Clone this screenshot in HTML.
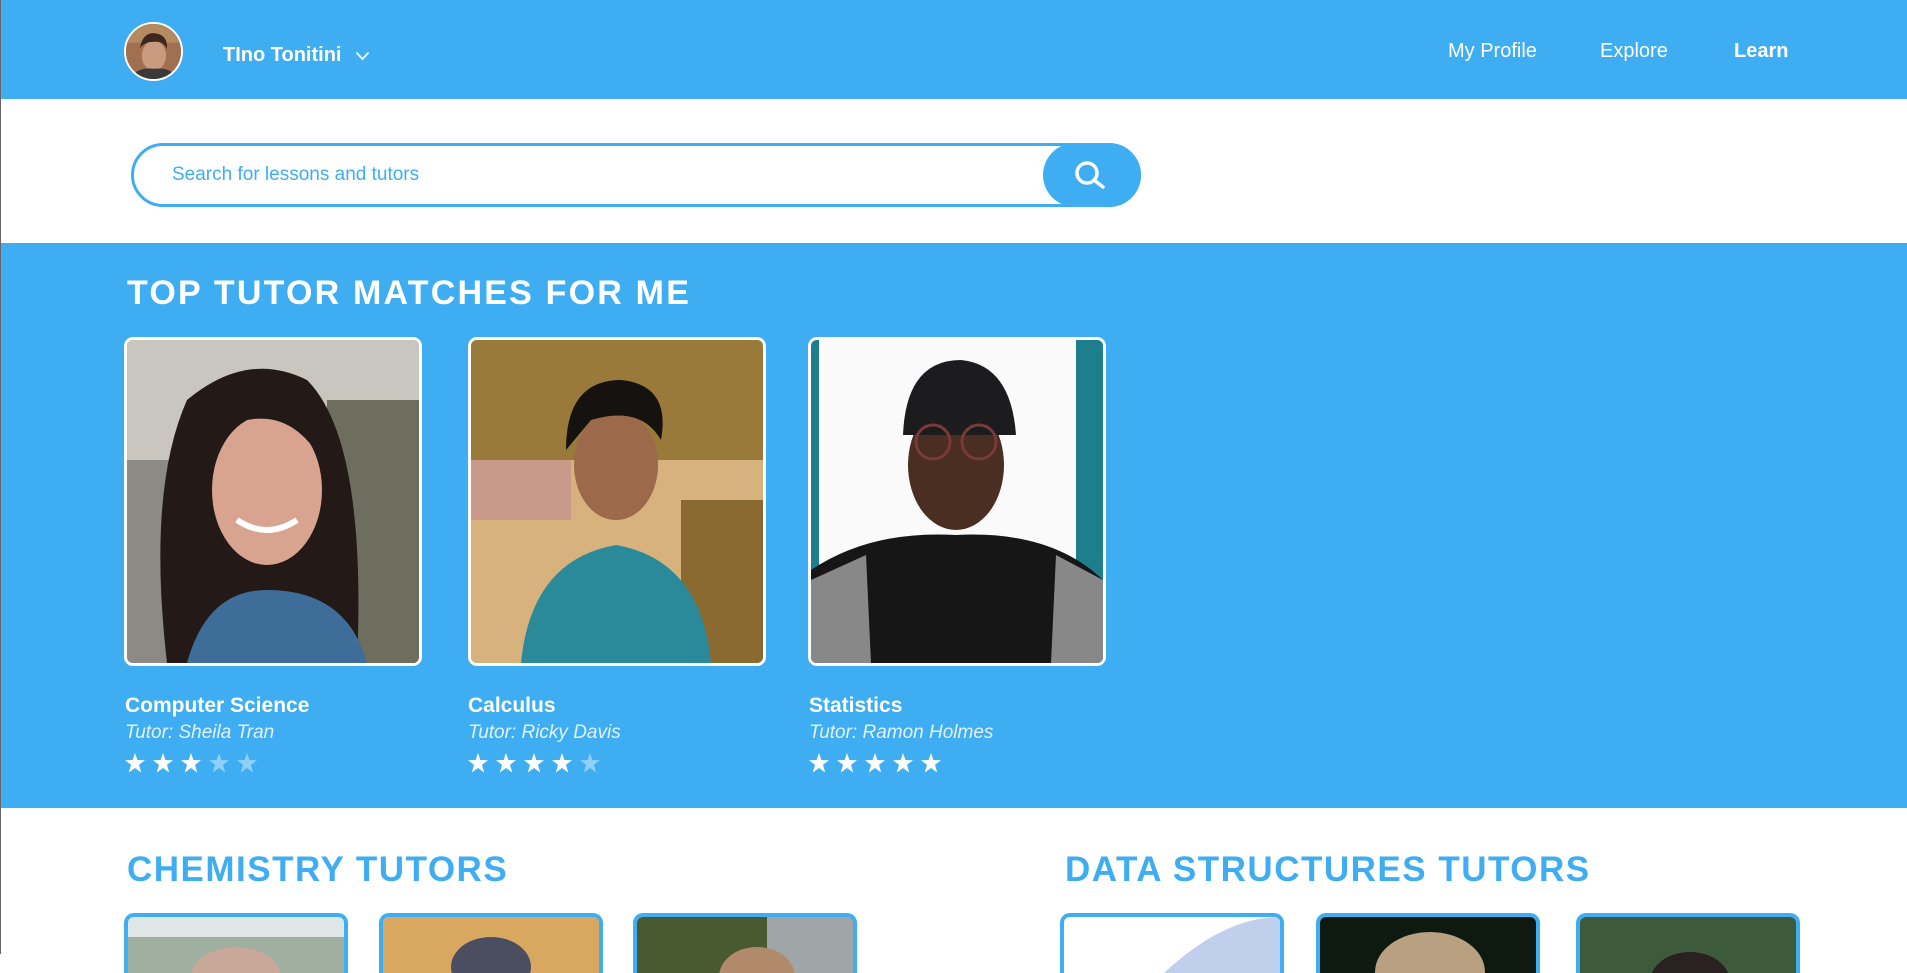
<!DOCTYPE html>
<html><head><meta charset="utf-8"><style>
*{margin:0;padding:0;box-sizing:border-box}
body{width:1907px;height:954px;overflow:hidden;background:#fff;font-family:"Liberation Sans",sans-serif;position:relative;border-left:1px solid #666}
.abs{position:absolute}
.hdr{left:0;top:0;width:1907px;height:99px;background:#3fadf2}
.nav{color:#fff;font-size:20px;top:40px}
.sec{left:0;top:243px;width:1907px;height:565px;background:#3fadf2}
.card{width:298px;height:329px;border:3px solid #fff;border-radius:9px;overflow:hidden;top:337px}
.card svg,.sc svg{display:block;width:100%;height:100%}
.subj{color:#fff;font-size:21px;font-weight:bold;top:694px}
.tut{color:#e3f2fd;font-size:19px;font-style:italic;top:722px}
.stars{top:753px}
.h2{color:#3fadf2;font-size:35px;font-weight:bold;top:850px;letter-spacing:1.5px}
.sc{width:224px;height:60px;top:913px;border:4px solid #3fadf2;border-bottom:none;border-radius:10px 10px 0 0;overflow:hidden}
</style></head><body>
<div class="abs hdr"></div>
<div class="abs" style="left:123px;top:22px;width:59px;height:59px;border-radius:50%;border:2px solid #fff;overflow:hidden;background:#7a5a45">
<svg viewBox="0 0 59 59"><rect width="59" height="59" fill="#a07050"/><rect x="0" y="0" width="59" height="20" fill="#b58a60"/><ellipse cx="30" cy="34" rx="13" ry="16" fill="#c99a7e"/><path d="M15 26 Q18 8 32 10 Q45 12 44 27 Q40 18 30 19 Q20 19 15 26Z" fill="#3a2820"/><path d="M5 59 Q10 46 30 48 Q50 46 54 59Z" fill="#3a3a38"/></svg></div>
<div class="abs" style="left:222px;top:44px;color:#fff;font-size:20px;font-weight:bold">TIno Tonitini</div>
<svg class="abs" style="left:354px;top:51px" width="15" height="10" viewBox="0 0 15 10"><path d="M1.5 1.5 L7.5 8 L13.5 1.5" stroke="#fff" stroke-width="1.8" fill="none"/></svg>
<div class="abs nav" style="left:1447px">My Profile</div>
<div class="abs nav" style="left:1599px">Explore</div>
<div class="abs nav" style="left:1733px;font-weight:bold">Learn</div>

<div class="abs" style="left:130px;top:143px;width:1010px;height:64px;border:3px solid #3fadf2;border-radius:32px;background:#fff"></div>
<div class="abs" style="left:1042px;top:143px;width:98px;height:64px;border-radius:32px;background:#3fadf2"></div>
<svg class="abs" style="left:1070px;top:158px" width="40" height="34" viewBox="0 0 40 34"><circle cx="16" cy="15" r="10" stroke="#fff" stroke-width="3.5" fill="none"/><path d="M23 22 L32 29" stroke="#fff" stroke-width="3.5" stroke-linecap="round"/></svg>
<div class="abs" style="left:171px;top:164px;color:#3fadf2;font-size:19px">Search for lessons and tutors</div>

<div class="abs sec"></div>
<div class="abs" style="left:126px;top:274px;color:#fff;font-size:34px;font-weight:bold;letter-spacing:2.2px">TOP TUTOR MATCHES FOR ME</div>

<div class="abs card" style="left:123px"><svg viewBox="0 0 292 323" preserveAspectRatio="none"><rect width="292" height="323" fill="#8c8a84"/><rect width="292" height="120" fill="#c9c6c0"/><rect x="200" y="60" width="92" height="263" fill="#6d6e5e"/><path d="M40 323 Q20 150 60 60 Q120 10 180 40 Q240 100 230 323Z" fill="#231a18"/><ellipse cx="140" cy="150" rx="55" ry="75" fill="#d9a48f"/><path d="M70 120 Q80 40 150 45 Q200 55 200 130 Q170 70 120 80 Q90 90 70 120Z" fill="#231a18"/><path d="M60 323 Q80 250 140 250 Q220 250 240 323Z" fill="#3f6d9a"/><path d="M110 180 Q140 200 170 180" stroke="#fff" stroke-width="6" fill="none"/></svg></div>
<div class="abs card" style="left:467px"><svg viewBox="0 0 292 323" preserveAspectRatio="none"><rect width="292" height="323" fill="#d7b27c"/><rect width="292" height="120" fill="#9a7a3a"/><rect x="0" y="120" width="100" height="60" fill="#c99a8a"/><rect x="210" y="160" width="82" height="163" fill="#8a6a30"/><ellipse cx="145" cy="125" rx="42" ry="55" fill="#9c6a4a"/><path d="M95 110 Q95 40 150 40 Q200 45 190 100 Q170 65 120 80Z" fill="#151210"/><path d="M50 323 Q60 220 145 205 Q230 220 240 323Z" fill="#2a8a9a"/></svg></div>
<div class="abs card" style="left:807px"><svg viewBox="0 0 292 323" preserveAspectRatio="none"><rect width="292" height="323" fill="#fafafa"/><rect x="0" y="0" width="8" height="323" fill="#1e7f8c"/><rect x="265" y="0" width="27" height="260" fill="#1e7f8c"/><ellipse cx="145" cy="125" rx="48" ry="65" fill="#4a2e22"/><path d="M92 95 Q95 20 150 20 Q200 25 205 95 Z" fill="#1c1c1e"/><circle cx="122" cy="102" r="17" stroke="#7a3a3a" stroke-width="3" fill="none"/><circle cx="168" cy="102" r="17" stroke="#7a3a3a" stroke-width="3" fill="none"/><path d="M0 323 L0 230 Q60 190 145 195 Q240 190 292 240 L292 323Z" fill="#161616"/><path d="M0 240 L55 215 L60 323 L0 323Z M245 215 L292 240 L292 323 L240 323Z" fill="#888"/></svg></div>

<div class="abs subj" style="left:124px">Computer Science</div>
<div class="abs tut" style="left:124px">Tutor: Sheila Tran</div>
<div class="abs subj" style="left:467px">Calculus</div>
<div class="abs tut" style="left:467px">Tutor: Ricky Davis</div>
<div class="abs subj" style="left:808px">Statistics</div>
<div class="abs tut" style="left:808px">Tutor: Ramon Holmes</div>

<svg width="0" height="0" style="position:absolute"><defs><polygon id="st" points="10,0 12.4,7 20,7.2 14,11.8 16.2,19.5 10,15 3.8,19.5 6,11.8 0,7.2 7.6,7"/></defs></svg>
<svg class="abs stars" style="left:124px" width="140" height="22"><use href="#st" fill="#fff"/><use href="#st" x="28" fill="#fff"/><use href="#st" x="56" fill="#fff"/><use href="#st" x="84" fill="#8fd0f8"/><use href="#st" x="112" fill="#8fd0f8"/></svg>
<svg class="abs stars" style="left:467px" width="140" height="22"><use href="#st" fill="#fff"/><use href="#st" x="28" fill="#fff"/><use href="#st" x="56" fill="#fff"/><use href="#st" x="84" fill="#fff"/><use href="#st" x="112" fill="#8fd0f8"/></svg>
<svg class="abs stars" style="left:808px" width="140" height="22"><use href="#st" fill="#fff"/><use href="#st" x="28" fill="#fff"/><use href="#st" x="56" fill="#fff"/><use href="#st" x="84" fill="#fff"/><use href="#st" x="112" fill="#fff"/></svg>

<div class="abs h2" style="left:126px">CHEMISTRY TUTORS</div>
<div class="abs h2" style="left:1064px">DATA STRUCTURES TUTORS</div>

<div class="abs sc" style="left:123px"><svg viewBox="0 0 216 56" preserveAspectRatio="none"><rect width="216" height="56" fill="#9fb0a0"/><rect width="216" height="20" fill="#dfe6e6"/><ellipse cx="108" cy="60" rx="45" ry="30" fill="#c9a89a"/></svg></div>
<div class="abs sc" style="left:378px"><svg viewBox="0 0 216 56" preserveAspectRatio="none"><rect width="216" height="56" fill="#d8a860"/><ellipse cx="108" cy="50" rx="40" ry="30" fill="#4a4e60"/></svg></div>
<div class="abs sc" style="left:632px"><svg viewBox="0 0 216 56" preserveAspectRatio="none"><rect width="216" height="56" fill="#4a5a30"/><rect x="130" width="86" height="56" fill="#a0a6a8"/><ellipse cx="120" cy="60" rx="38" ry="30" fill="#b08a6a"/></svg></div>
<div class="abs sc" style="left:1059px"><svg viewBox="0 0 216 56" preserveAspectRatio="none"><rect width="216" height="56" fill="#fff"/><path d="M100 56 Q160 0 216 0 L216 56Z" fill="#c0d0ec"/></svg></div>
<div class="abs sc" style="left:1315px"><svg viewBox="0 0 216 56" preserveAspectRatio="none"><rect width="216" height="56" fill="#0e1a10"/><ellipse cx="110" cy="55" rx="55" ry="40" fill="#b8a080"/></svg></div>
<div class="abs sc" style="left:1575px"><svg viewBox="0 0 216 56" preserveAspectRatio="none"><rect width="216" height="56" fill="#3d5a3a"/><ellipse cx="110" cy="65" rx="40" ry="30" fill="#2a2220"/></svg></div>
</body></html>
